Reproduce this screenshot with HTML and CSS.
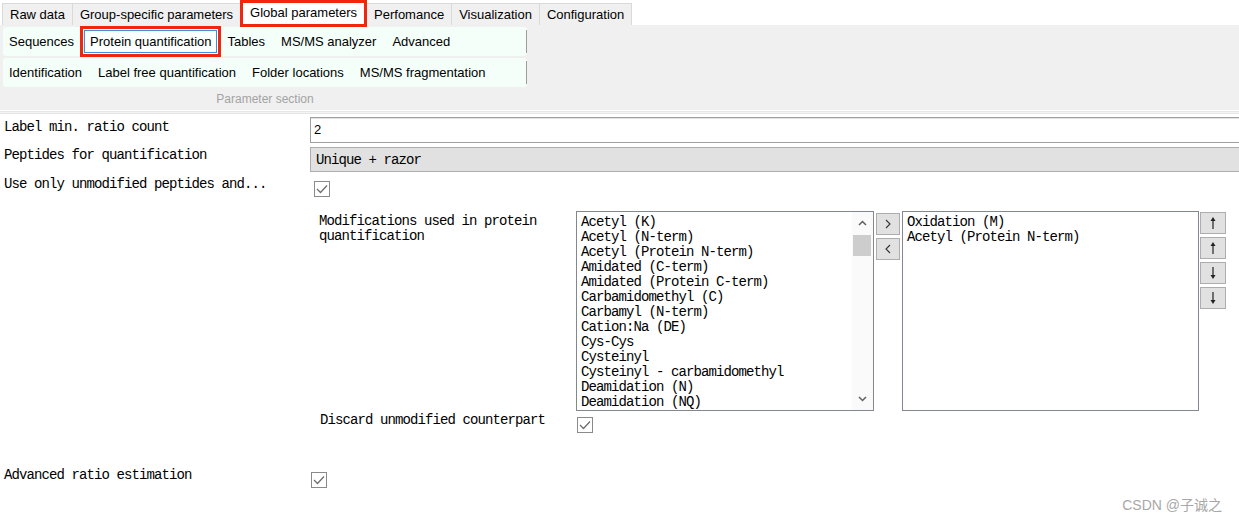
FILE: index.html
```html
<!DOCTYPE html>
<html>
<head>
<meta charset="utf-8">
<link rel="stylesheet" href="styles.css">
</head>
<body>
<div class="tabs">
  <div class="tab first">Raw data</div>
  <div class="tab">Group-specific parameters</div>
  <div class="tab sel">Global parameters</div>
  <div class="tab">Perfomance</div>
  <div class="tab">Visualization</div>
  <div class="tab">Configuration</div>
</div>
<div class="tabpage">
  <div class="ribbon">
    <div class="strip">
      <span class="tsb">Sequences</span>
      <span class="tsb active">Protein quantification</span>
      <span class="tsb">Tables</span>
      <span class="tsb">MS/MS analyzer</span>
      <span class="tsb">Advanced</span>
      <span class="sep"></span>
    </div>
    <div class="strip">
      <span class="tsb">Identification</span>
      <span class="tsb">Label free quantification</span>
      <span class="tsb">Folder locations</span>
      <span class="tsb">MS/MS fragmentation</span>
      <span class="sep"></span>
    </div>
    <div class="caption">Parameter section</div>
  </div>
</div>
<div class="divider"></div>
<div class="form">
  <div class="row r1">
    <div class="lbl">Label min. ratio count</div>
    <div class="ctl"><div class="textbox">2</div></div>
  </div>
  <div class="row r2">
    <div class="lbl">Peptides for quantification</div>
    <div class="ctl"><div class="combo">Unique + razor</div></div>
  </div>
  <div class="row r3">
    <div class="lbl">Use only unmodified peptides and...</div>
    <div class="ctl"><span class="cb cb1"><svg width="14" height="14" viewBox="0 0 14 14"><polyline points="2,7 5.5,10.5 12,3.5" fill="none" stroke="#6e6e6e" stroke-width="1.3"/></svg></span></div>
  </div>
  <div class="mods">
    <div class="mlbl">Modifications used in protein quantification</div>
    <div class="listbox">
      <div class="items">
        <div>Acetyl (K)</div>
        <div>Acetyl (N-term)</div>
        <div>Acetyl (Protein N-term)</div>
        <div>Amidated (C-term)</div>
        <div>Amidated (Protein C-term)</div>
        <div>Carbamidomethyl (C)</div>
        <div>Carbamyl (N-term)</div>
        <div>Cation:Na (DE)</div>
        <div>Cys-Cys</div>
        <div>Cysteinyl</div>
        <div>Cysteinyl - carbamidomethyl</div>
        <div>Deamidation (N)</div>
        <div>Deamidation (NQ)</div>
      </div>
      <div class="vscroll">
        <div class="sarrow"><svg width="9" height="6" viewBox="0 0 9 6"><polyline points="1,5 4.5,1.5 8,5" fill="none" stroke="#606060" stroke-width="1.5"/></svg></div>
        <div class="thumb"></div>
        <div class="strack"></div>
        <div class="sarrow"><svg width="9" height="6" viewBox="0 0 9 6"><polyline points="1,1 4.5,4.5 8,1" fill="none" stroke="#606060" stroke-width="1.5"/></svg></div>
      </div>
    </div>
    <div class="btncol">
      <div class="btn"><svg width="8" height="10" viewBox="0 0 8 10"><polyline points="2,1 6,5 2,9" fill="none" stroke="#333" stroke-width="1.1"/></svg></div>
      <div class="btn"><svg width="8" height="10" viewBox="0 0 8 10"><polyline points="6,1 2,5 6,9" fill="none" stroke="#333" stroke-width="1.1"/></svg></div>
    </div>
    <div class="listbox rightlist">
      <div class="items">
        <div>Oxidation (M)</div>
        <div>Acetyl (Protein N-term)</div>
      </div>
    </div>
    <div class="btncol2">
      <div class="btn wide"><svg width="8" height="14" viewBox="0 0 8 14"><path d="M4 1 L1.5 5 L6.5 5 Z" fill="#222"/><line x1="4" y1="4" x2="4" y2="13" stroke="#222" stroke-width="1.2"/></svg></div>
      <div class="btn wide"><svg width="8" height="14" viewBox="0 0 8 14"><path d="M4 1 L1.5 5 L6.5 5 Z" fill="#222"/><line x1="4" y1="4" x2="4" y2="13" stroke="#222" stroke-width="1.2"/></svg></div>
      <div class="btn wide"><svg width="8" height="14" viewBox="0 0 8 14"><path d="M4 13 L1.5 9 L6.5 9 Z" fill="#222"/><line x1="4" y1="1" x2="4" y2="10" stroke="#222" stroke-width="1.2"/></svg></div>
      <div class="btn wide"><svg width="8" height="14" viewBox="0 0 8 14"><path d="M4 13 L1.5 9 L6.5 9 Z" fill="#222"/><line x1="4" y1="1" x2="4" y2="10" stroke="#222" stroke-width="1.2"/></svg></div>
    </div>
    <div class="dlbl">Discard unmodified counterpart</div>
    <div class="dcb"><span class="cb"><svg width="14" height="14" viewBox="0 0 14 14"><polyline points="2,7 5.5,10.5 12,3.5" fill="none" stroke="#6e6e6e" stroke-width="1.3"/></svg></span></div>
  </div>
  <div class="row r6">
    <div class="lbl">Advanced ratio estimation</div>
    <div class="ctl"><span class="cb cb6"><svg width="14" height="14" viewBox="0 0 14 14"><polyline points="2,7 5.5,10.5 12,3.5" fill="none" stroke="#6e6e6e" stroke-width="1.3"/></svg></span></div>
  </div>
</div>
<div class="watermark">CSDN @子诚之</div>
</body>
</html>
```

FILE: styles.css
```css
html, body {
  margin: 0;
  padding: 0;
  background: #ffffff;
  width: 1239px;
  height: 522px;
  overflow: hidden;
}
body {
  position: relative;
  font-family: "Liberation Sans", Arial, sans-serif;
  font-size: 13px;
  color: #000;
}

/* tab strip */
.tabs {
  display: flex;
  align-items: flex-end;
  height: 25px;
  padding-left: 2px;
}
.tab {
  height: 22px;
  line-height: 21px;
  padding: 0 7px;
  box-sizing: border-box;
  background: #f0f0f0;
  border: 1px solid #d9d9d9;
  border-bottom: none;
  margin-left: -1px;
  white-space: nowrap;
}
.tab.first { margin-left: 0; }
.tab.sel {
  height: 27px;
  line-height: 23px;
  margin-bottom: -2px;
  background: #ffffff;
  padding: 0 9px;
  outline: 3px solid #f2260f;
  outline-offset: -3px;
  z-index: 2;
}

/* tab page with ribbon */
.tabpage {
  background: #f0f0f0;
  height: 85px;
  padding-top: 2px;
  box-sizing: border-box;
}
.ribbon {
  width: 524px;
  margin-left: 3px;
}
.strip {
  display: flex;
  align-items: center;
  gap: 4px;
  height: 29px;
  background: #f5fffa;
  border-radius: 3px;
  margin-bottom: 2px;
}
.tsb {
  display: block;
  height: 23px;
  line-height: 21px;
  padding: 0 5px;
  border: 1px solid transparent;
  box-sizing: border-box;
  white-space: nowrap;
}
.tsb.active {
  border-color: #3c8fdc;
  background: #fbfffd;
  outline: 3px solid #f2260f;
  outline-offset: 1px;
}
.sep {
  margin-left: auto;
  width: 1px;
  align-self: stretch;
  margin-top: 3px;
  margin-bottom: 3px;
  background: #9c9c9c;
}
.caption {
  height: 20px;
  line-height: 20px;
  text-align: center;
  color: #a3a3a3;
  font-size: 12px;
}

.divider {
  height: 1px;
  margin-top: 1px;
  border-top: 1px solid #e6e6e6;
  border-bottom: 1px solid #e6e6e6;
  background: #f3f3f3;
}

/* form */
.form {
  padding-left: 4px;
}
.row {
  display: flex;
}
.lbl, .mlbl, .dlbl, .items, .combo {
  font-family: "Liberation Mono", "Courier New", monospace;
  font-size: 14px;
  letter-spacing: -0.9px;
  line-height: 15px;
  white-space: nowrap;
}
.lbl {
  width: 306px;
  flex: none;
  padding-top: 1px;
}
.ctl {
  flex: 1;
  min-width: 0;
}
.r1 { margin-top: 3px; height: 26px; }
.r1 .lbl { padding-top: 3px; }
.r2 { margin-top: 4px; height: 25px; }
.r3 { margin-top: 4px; height: 21px; }
.r6 { margin-top: 34px; height: 21px; }

.textbox {
  height: 26px;
  box-sizing: border-box;
  border: 1px solid #a0a0a0;
  box-shadow: inset 0 1px 0 #e2e2e2;
  line-height: 24px;
  padding-left: 3px;
  width: calc(100% + 4px);
  background: #fff;
  font-family: "Liberation Sans", Arial, sans-serif;
}
.combo {
  height: 25px;
  box-sizing: border-box;
  border: 1px solid #adadad;
  background: #e1e1e1;
  line-height: 23px;
  padding: 1px 0 0 5px;
  width: calc(100% + 4px);
}

.cb {
  display: flex;
  align-items: center;
  justify-content: center;
  width: 16px;
  height: 16px;
  box-sizing: border-box;
  border: 1px solid #8a8a8a;
  background: #fff;
}
.cb1 { margin-top: 5px; margin-left: 4px; }
.cb6 { margin-top: 5px; margin-left: 1px; }

/* modifications block */
.mods {
  margin-left: 306px;
  margin-top: 14px;
  display: grid;
  grid-template-columns: 266px 298px 28px 297px 28px;
  grid-template-rows: 200px 21px;
  row-gap: 1px;
}
.mlbl {
  white-space: normal;
  padding-left: 9px;
  padding-top: 3px;
  width: 240px;
}
.listbox {
  display: flex;
  box-sizing: border-box;
  border: 1px solid #828790;
  background: #fff;
  height: 200px;
  overflow: hidden;
}
.items {
  flex: 1;
  padding: 3px 0 0 4px;
}
.vscroll {
  width: 21px;
  flex: none;
  display: flex;
  flex-direction: column;
  background: #fafafa;
}
.sarrow {
  height: 22px;
  display: flex;
  align-items: center;
  justify-content: center;
}
.thumb {
  height: 21px;
  margin: 1px 2px 0 1px;
  background: #cdcdcd;
}
.strack { flex: 1; }

.btncol, .btncol2 {
  display: flex;
  flex-direction: column;
  gap: 3px;
}
.btncol { padding: 2px 0 0 2px; }
.btncol2 { padding: 1px 0 0 1px; }
.btn {
  width: 24px;
  height: 22px;
  box-sizing: border-box;
  border: 1px solid #adadad;
  background: #e1e1e1;
  display: flex;
  align-items: center;
  justify-content: center;
}
.btn.wide { width: 26px; }

.dlbl {
  padding-left: 10px;
  padding-top: 1px;
}
.dcb {
  padding: 5px 0 0 1px;
}

.watermark {
  position: absolute;
  right: 17px;
  bottom: 9px;
  color: #a8a8a8;
  font-family: "Liberation Sans", "Noto Sans CJK SC", sans-serif;
  font-size: 14px;
  line-height: 16px;
}
```
